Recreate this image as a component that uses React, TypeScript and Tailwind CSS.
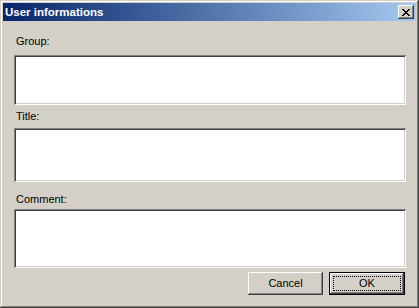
export default function App() {
  const field =
    "bg-white shadow-[inset_1px_1px_#808080,inset_-1px_-1px_#ffffff,inset_2px_2px_#404040,inset_-2px_-2px_#d4d0c8]";
  const raised =
    "shadow-[inset_-1px_-1px_#404040,inset_1px_1px_#ffffff,inset_-2px_-2px_#808080,inset_2px_2px_#d4d0c8]";

  return (
    <div
      className="w-[419px] h-[308px] bg-[#d4d0c8] p-[3px] flex flex-col text-black text-[11px] shadow-[inset_-1px_-1px_#404040,inset_1px_1px_#d4d0c8,inset_-2px_-2px_#808080,inset_2px_2px_#ffffff]"
      style={{ fontFamily: '"Liberation Sans", Arial, sans-serif' }}
    >
      {/* Title bar */}
      <div className="h-[18px] flex items-center justify-between pl-[2px] pr-[2px] bg-gradient-to-r from-[#0a246a] to-[#a6caf0]">
        <span className="text-white font-bold text-[11.5px] leading-[13px]">User informations</span>
        <button className={`w-[16px] h-[14px] bg-[#d4d0c8] flex items-center justify-center ${raised}`}>
          <svg width="8" height="7" viewBox="0 0 8 7" shapeRendering="crispEdges">
            <path
              fill="#000"
              d="M0 0h2v1H0zM6 0h2v1H6zM1 1h2v1H1zM5 1h2v1H5zM2 2h4v1H2zM3 3h2v1H3zM2 4h4v1H2zM1 5h2v1H1zM5 5h2v1H5zM0 6h2v1H0zM6 6h2v1H6z"
            />
          </svg>
        </button>
      </div>

      {/* Content */}
      <div className="flex flex-col pl-[11px] pr-[10px]">
        <div className="mt-[14px] h-[13px] leading-[13px] pl-[2px]">Group:</div>
        <div className={`mt-[7px] h-[50px] ${field}`} />

        <div className="mt-[5px] h-[13px] leading-[13px] pl-[2px]">Title:</div>
        <div className={`mt-[5px] h-[54px] ${field}`} />

        <div className="mt-[11px] h-[13px] leading-[13px] pl-[2px]">Comment:</div>
        <div className={`mt-[3px] h-[59px] ${field}`} />

        <div className="mt-[4px] flex justify-end gap-[6px] pr-[1px]">
          <button className={`w-[75px] h-[23px] bg-[#d4d0c8] leading-[13px] ${raised}`}>Cancel</button>
          <button className="w-[76px] h-[23px] bg-[#d4d0c8] border border-black">
            <div className="w-full h-full p-[3px] shadow-[inset_-1px_-1px_#404040,inset_1px_1px_#ffffff,inset_-2px_-2px_#808080,inset_2px_2px_#d4d0c8]">
              <div className="w-full h-full border border-dotted border-black flex items-center justify-center leading-[13px]">
                OK
              </div>
            </div>
          </button>
        </div>
      </div>
    </div>
  );
}
